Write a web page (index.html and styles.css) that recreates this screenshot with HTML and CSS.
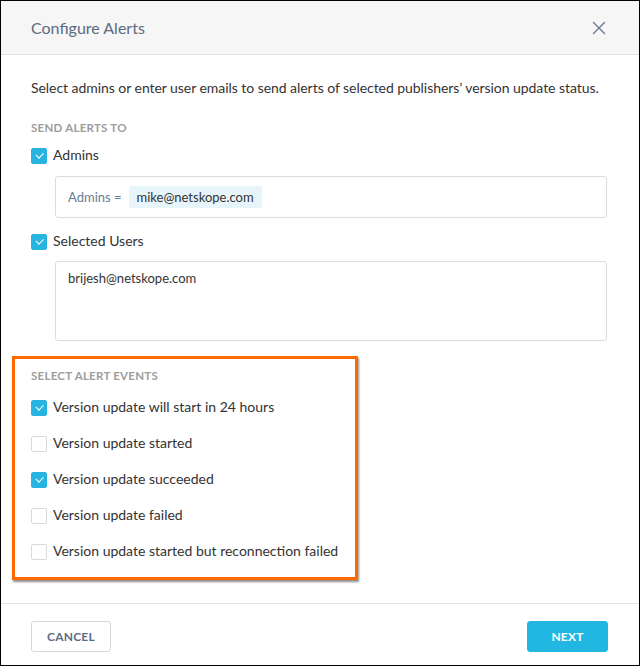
FILE: index.html
```html
<!DOCTYPE html>
<html>
<head>
<meta charset="utf-8">
<link rel="stylesheet" href="styles.css">
</head>
<body>
<div class="dialog">
  <div class="header">
    <span class="title">Configure Alerts</span>
    <svg class="close" width="14" height="14" viewBox="0 0 14 14"><path d="M1.5 1.5L12.5 12.5M12.5 1.5L1.5 12.5" stroke="#6b7a90" stroke-width="1.4" fill="none" stroke-linecap="round"/></svg>
  </div>
  <div class="body">
    <p class="desc">Select admins or enter user emails to send alerts of selected publishers’ version update status.</p>
    <div class="section-label first">SEND ALERTS TO</div>
    <label class="row r-admins"><span class="cb checked"></span><span>Admins</span></label>
    <div class="input admins-input">
      <span class="prefix">Admins =</span>
      <span class="chip">mike@netskope.com</span>
    </div>
    <label class="row r-users"><span class="cb checked"></span><span>Selected Users</span></label>
    <div class="textarea">brijesh@netskope.com</div>
    <div class="annot">
      <div class="section-label">SELECT ALERT EVENTS</div>
      <div class="events">
        <label class="row"><span class="cb checked"></span><span>Version update will start in 24 hours</span></label>
        <label class="row"><span class="cb"></span><span>Version update started</span></label>
        <label class="row"><span class="cb checked"></span><span>Version update succeeded</span></label>
        <label class="row"><span class="cb"></span><span>Version update failed</span></label>
        <label class="row"><span class="cb"></span><span>Version update started but reconnection failed</span></label>
      </div>
    </div>
  </div>
  <div class="footer">
    <button class="btn cancel">CANCEL</button>
    <button class="btn next">NEXT</button>
  </div>
</div>
</body>
</html>
```
FILE: styles.css
```css
* { box-sizing: border-box; }
html, body { margin: 0; padding: 0; background: #fff; }
body { font-family: Lato, "Open Sans", sans-serif; color: #333; }
.dialog {
  width: 640px; height: 666px;
  border: 1px solid #000;
  display: flex; flex-direction: column;
  background: #fff;
}
.header {
  height: 54px;
  background: #f6f6f6;
  border-bottom: 1px solid #e2e2e2;
  display: flex; align-items: center; justify-content: space-between;
  padding: 0 33px 0 30px;
}
.title { font-size: 16px; color: #5b6b82; }
.close { display: block; }
.body { padding: 0 32px 0 30px; }
.desc { margin: 23px 0 0; font-size: 14px; line-height: 20px; color: #333; letter-spacing: -0.05px; }
.section-label {
  font-size: 11.5px; line-height: 16px; font-weight: 700; color: #9d9d9d; letter-spacing: 0.25px;
}
.section-label.first { margin-top: 22px; }
.row { display: flex; align-items: center; height: 20px; font-size: 14px; line-height: 18px; color: #333; }
.row span:last-child { position: relative; top: -1px; }
.r-admins { margin-top: 10px; }
.cb {
  width: 16px; height: 16px; border: 1px solid #d9d9d9; border-radius: 2px; background: #fff;
  margin-right: 6px; flex: none; position: relative;
}
.row .cb { top: 0; }
.cb.checked { background: #27b4e0; border-color: #27b4e0; }
.cb.checked::after {
  content: ""; position: absolute; left: 4px; top: 3px; width: 6px; height: 3.5px;
  border-left: 1.3px solid #fff; border-bottom: 1.3px solid #fff; transform: rotate(-45deg);
}
.input {
  margin: 10px 0 0 24px; height: 42px; border: 1px solid #dcdcdc; border-radius: 3px;
  display: flex; align-items: center; padding: 0 12px;
}
.prefix { font-size: 13px; color: #6b7c93; margin-right: 7px; }
.chip { background: #e7f5fb; height: 22px; line-height: 22px; padding: 0 8px; font-size: 13px; color: #333; border-radius: 2px; }
.r-users { margin-top: 14px; }
.textarea {
  margin: 9px 0 0 24px; height: 80px; border: 1px solid #dcdcdc; border-radius: 3px;
  padding: 8px 12px; font-size: 13px; line-height: 16px; color: #333;
}
.annot {
  margin: 15px 0 0 -19px; width: 346px;
  border: 3px solid #ff6a00;
  box-shadow: 1px 2px 2px rgba(0,0,0,0.45);
  padding: 9px 0 15px 16px;
}
.events { margin-top: 14px; display: flex; flex-direction: column; gap: 16px; }
.footer {
  margin-top: auto; height: 62px; border-top: 1px solid #e2e2e2;
  display: flex; justify-content: space-between; align-items: flex-start;
  padding: 17px 31px 0 30px;
}
.btn {
  height: 31px; border-radius: 3px; font-family: Lato, sans-serif; font-size: 12px; font-weight: 700;
  letter-spacing: 0.2px; cursor: pointer; padding: 0;
}
.cancel { width: 80px; background: #fff; border: 1px solid #d8d8d8; color: #5b6b82; }
.next { width: 81px; background: #22b7e2; border: 1px solid #22b7e2; color: #fff; }
```
